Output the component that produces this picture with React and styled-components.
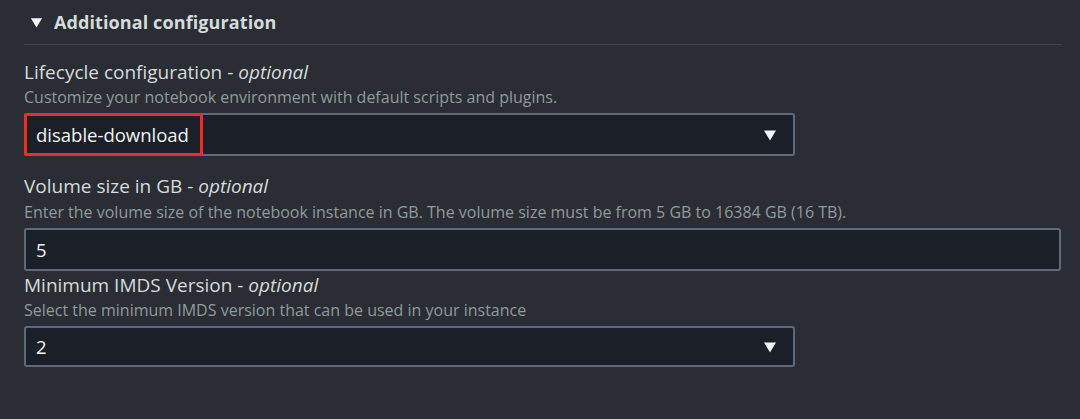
import React from "react";
import styled, { createGlobalStyle } from "styled-components";

const GlobalStyle = createGlobalStyle`
  html, body {
    margin: 0;
    padding: 0;
    background: #2a2d33;
  }
  body {
    font-family: "Open Sans", "Noto Sans", sans-serif;
  }
`;

export default function App() {
  return (
    <>
      <GlobalStyle />
      <Panel>
        <Header>
          <Caret size="13px" />
          <Title>Additional configuration</Title>
        </Header>
        <Divider />

        <Field top="15px">
          <Label>
            Lifecycle configuration - <em>optional</em>
          </Label>
          <Hint gap="3px">Customize your notebook environment with default scripts and plugins.</Hint>
          <Select width="771px">
            <Value>disable-download</Value>
            <Caret size="14px" />
            <Highlight />
          </Select>
        </Field>

        <Field top="18px">
          <Label>
            Volume size in GB - <em>optional</em>
          </Label>
          <Hint gap="4px">
            Enter the volume size of the notebook instance in GB. The volume size must be from 5 GB
            to 16384 GB (16 TB).
          </Hint>
          <Select width="1037px">
            <Value>5</Value>
          </Select>
        </Field>

        <Field top="2px">
          <Label>
            Minimum IMDS Version - <em>optional</em>
          </Label>
          <Hint gap="3px">Select the minimum IMDS version that can be used in your instance</Hint>
          <Select width="771px" height="41px">
            <Value>2</Value>
            <Caret size="14px" />
          </Select>
        </Field>
      </Panel>
    </>
  );
}

function Caret({ size }) {
  return (
    <CaretIcon width={size} height={size} viewBox="0 0 14 14">
      <path d="M1 2.5h12L7 12.5z" fill="#f2f3f3" />
    </CaretIcon>
  );
}

const Panel = styled.div`
  width: 1080px;
  height: 419px;
  padding: 10px 20px 0 24px;
  box-sizing: border-box;
  color: #d5dbdb;
`;

const Header = styled.div`
  display: flex;
  align-items: center;
  gap: 11px;
  padding-left: 6px;
  height: 24px;
`;

const CaretIcon = styled.svg`
  display: block;
  flex: none;
`;

const Title = styled.div`
  font-size: 18px;
  font-weight: 700;
  color: #d5dbdb;
  letter-spacing: 0.1px;
`;

const Divider = styled.div`
  height: 1px;
  background: #414750;
  margin-top: 10px;
  margin-right: -2px;
`;

const Field = styled.div`
  display: flex;
  flex-direction: column;
  margin-top: ${(p) => p.top};
`;

const Label = styled.div`
  font-size: 19px;
  line-height: 24px;
  color: #d5dbdb;

  em {
    font-style: italic;
  }
`;

const Hint = styled.div`
  font-size: 16px;
  line-height: 20px;
  color: #8f9b9c;
  margin-top: ${(p) => p.gap};
`;

const Select = styled.div`
  position: relative;
  display: flex;
  align-items: center;
  justify-content: space-between;
  width: ${(p) => p.width};
  height: ${(p) => p.height || "43px"};
  box-sizing: border-box;
  margin-top: 6px;
  padding: 0 16px 0 10px;
  background: #1b2028;
  border: 2px solid #5f6b7a;
  border-radius: 3px;
`;

const Value = styled.div`
  font-size: 18.5px;
  color: #f2f3f3;
`;

const Highlight = styled.div`
  position: absolute;
  left: -2px;
  top: -2px;
  width: 179px;
  height: 43px;
  box-sizing: border-box;
  border: 3px solid #e8302a;
  border-radius: 2px;
`;
